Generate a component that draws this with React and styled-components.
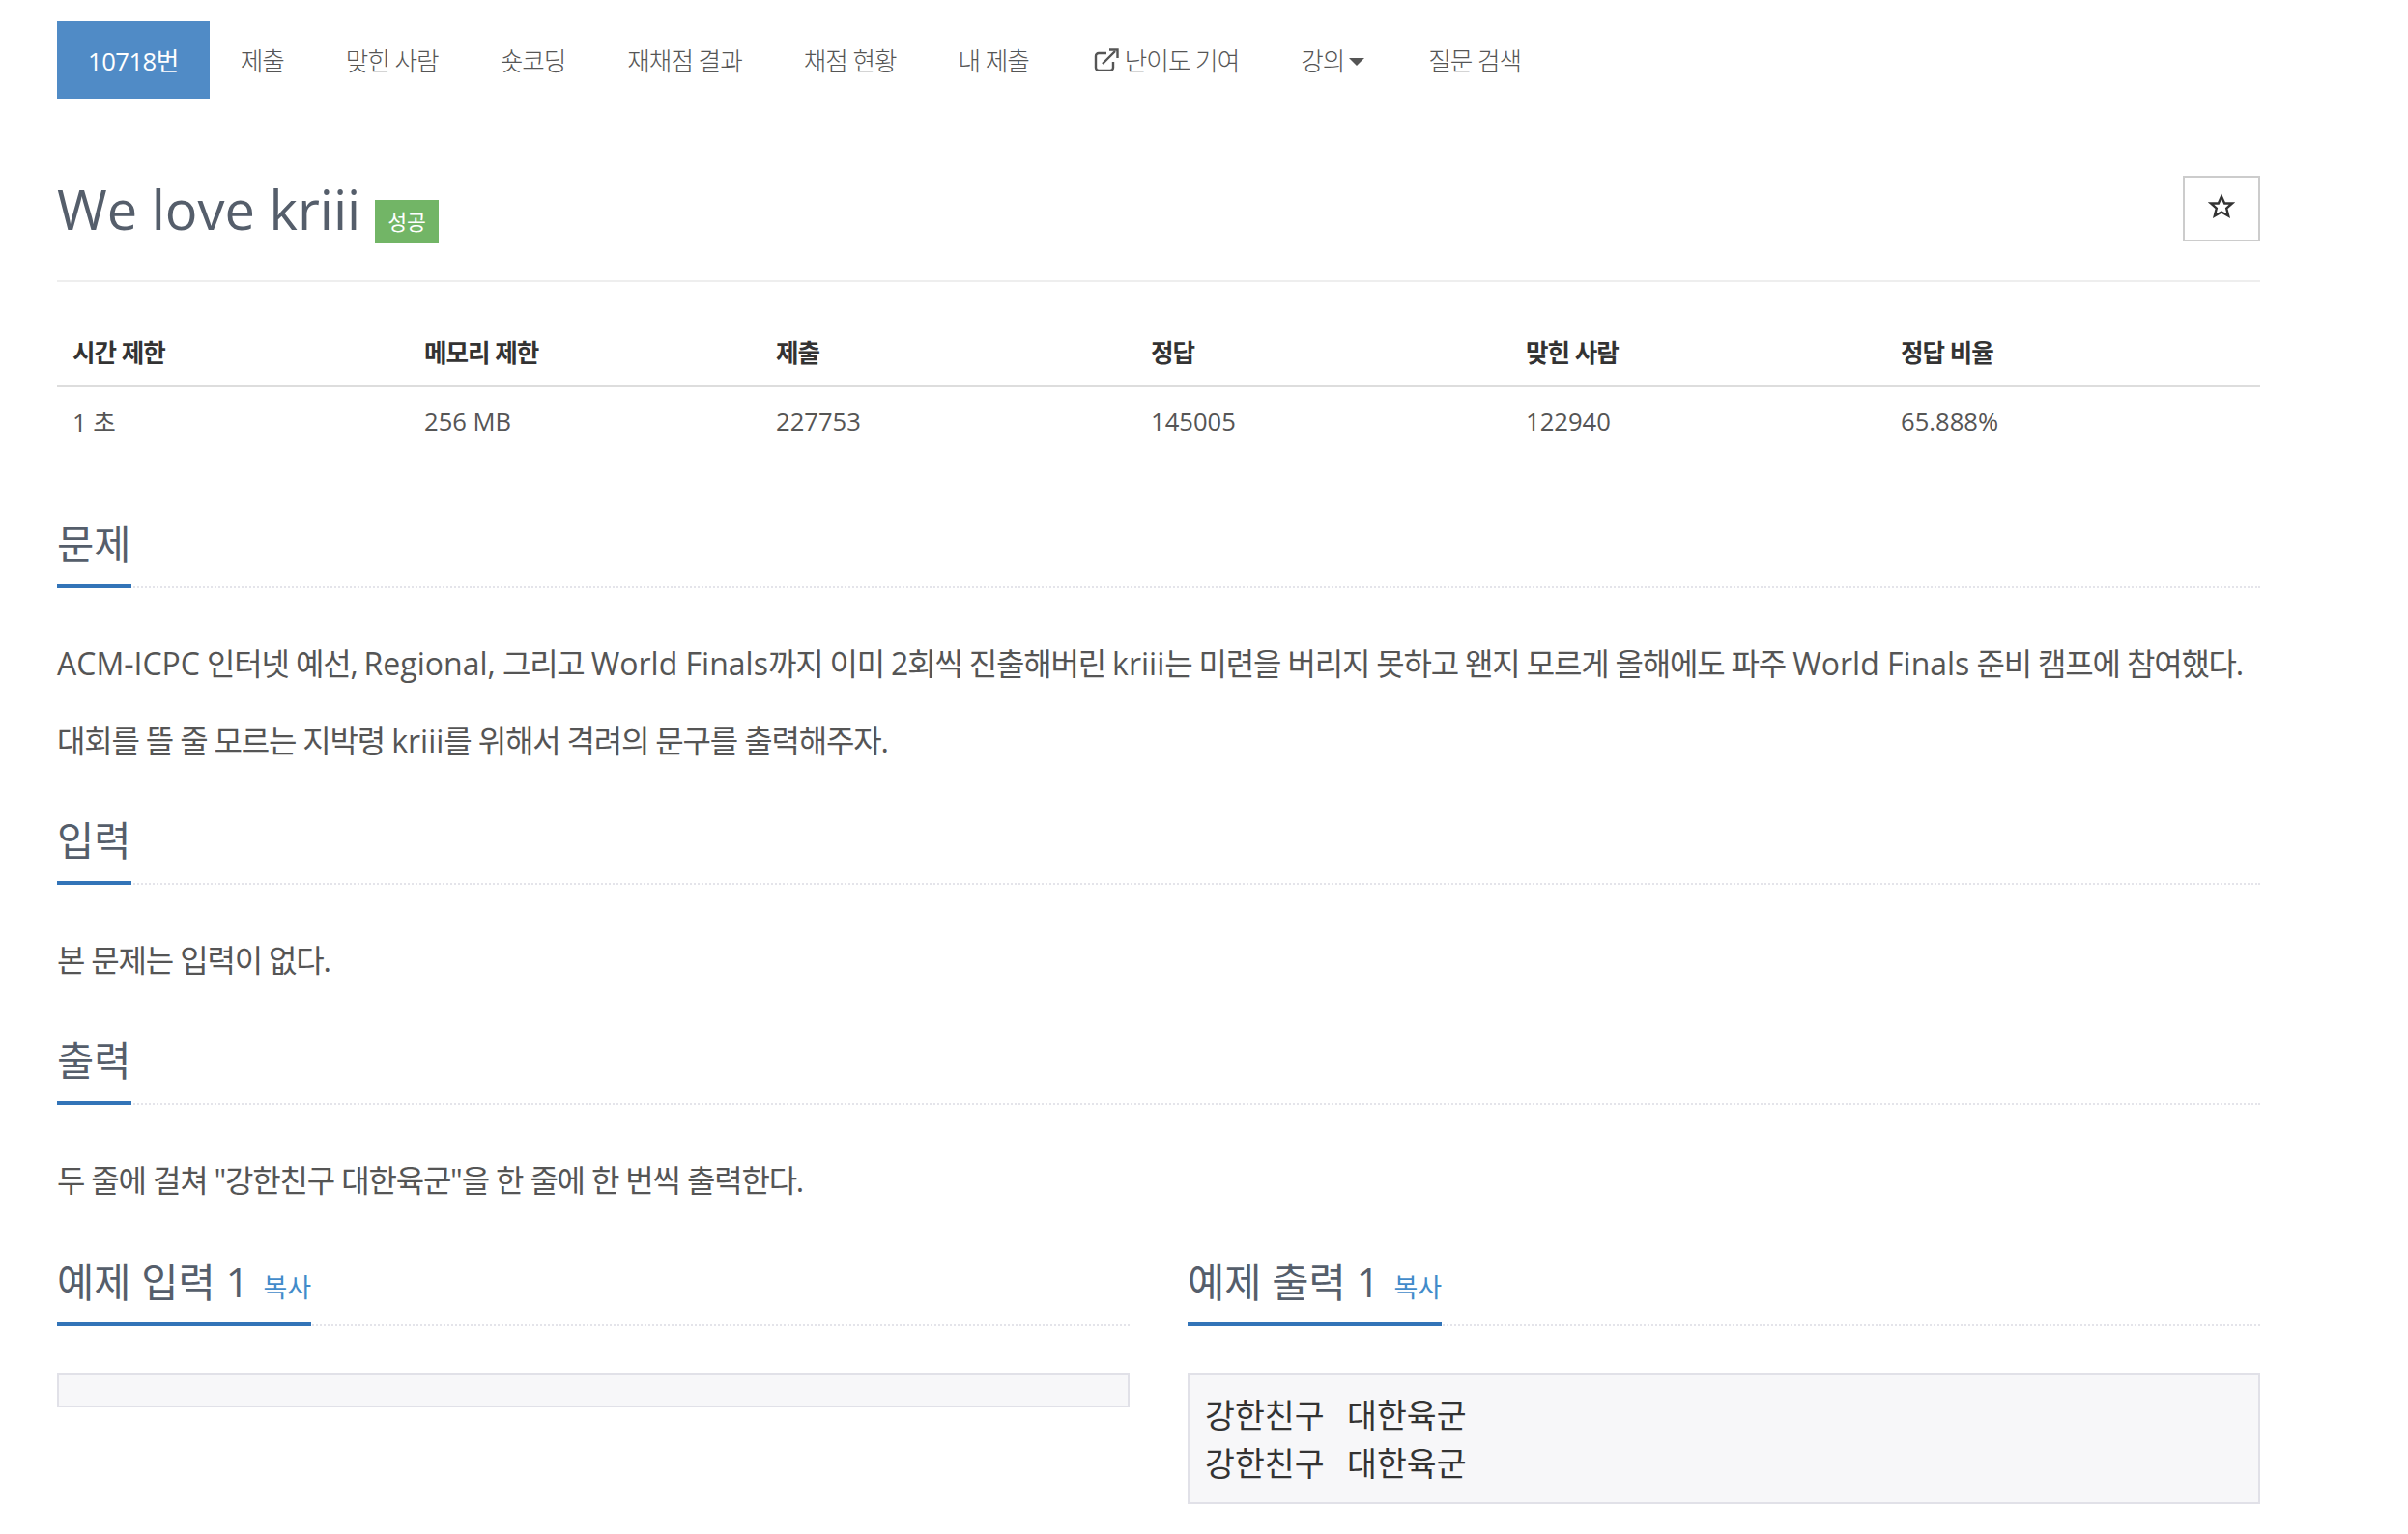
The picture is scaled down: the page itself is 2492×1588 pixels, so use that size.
import React from "react";
import styled, { createGlobalStyle } from "styled-components";

const GlobalStyle = createGlobalStyle`
  html, body {
    margin: 0;
    background: #fff;
    color: #555;
    font-family: "Open Sans", "Noto Sans CJK KR", sans-serif;
    font-size: 25.6px;
  }
`;

const Page = styled.div`
  width: 2280px;
  padding: 22px 0 0 59px;
`;

const Nav = styled.ul`
  display: flex;
  list-style: none;
  margin: 0;
  padding: 0;
`;

const NavItem = styled.li`
  display: flex;
  align-items: center;
  gap: ${(p) => p.$gap || 0}px;
  height: 80px;
  padding: 0 32px;
  color: ${(p) => (p.$active ? "#fff" : "#555")};
  background: ${(p) => (p.$active ? "#508bc6" : "transparent")};
  font-weight: ${(p) => (p.$active ? 400 : 300)};
  letter-spacing: ${(p) => (p.$active ? -0.5 : -1)}px;
  white-space: nowrap;
`;

const LinkIcon = styled.svg`
  margin-left: 3px;
`;

const Caret = styled.span`
  display: inline-block;
  margin: 4px 2px 0 5px;
  border-top: 8px solid #555;
  border-left: 8px solid transparent;
  border-right: 8px solid transparent;
`;

const PageHeader = styled.div`
  display: flex;
  justify-content: space-between;
  margin-top: 80px;
  height: 108px;
  border-bottom: 2px solid #eee;
`;

const Title = styled.h1`
  display: flex;
  align-items: flex-start;
  margin: 0;
  padding-top: 2px;
  color: #555e6b;
  font-size: 56px;
  font-weight: 400;
  line-height: 64px;
`;

const Badge = styled.span`
  margin: 23px 0 0 15px;
  padding: 0 13px;
  height: 45px;
  line-height: 45px;
  background: #72b566;
  color: #fff;
  font-size: 21.6px;
`;

const StarButton = styled.div`
  display: flex;
  align-items: center;
  justify-content: center;
  box-sizing: border-box;
  width: 80px;
  height: 68px;
  padding-bottom: 5px;
  border: 2px solid #ccc;
  color: #333;
`;

const InfoTable = styled.table`
  width: 100%;
  margin-top: 28px;
  border-collapse: collapse;
  table-layout: fixed;
`;

const Th = styled.th`
  box-sizing: border-box;
  width: ${(p) => p.$width}px;
  height: 80px;
  padding: 8px 16px 0;
  border-bottom: 2px solid #ddd;
  color: #333;
  font-weight: 600;
  letter-spacing: -1px;
  text-align: left;
`;

const Td = styled.td`
  padding: 0 16px;
  height: 70px;
  color: #555;
`;

const Section = styled.section`
  margin-top: ${(p) => p.$top || 0}px;
`;

const Headline = styled.div`
  height: 70px;
  border-bottom: 2px dotted #e4e4ea;
`;

const HeadlineLabel = styled.h2`
  display: inline-block;
  box-sizing: border-box;
  height: 72px;
  margin: 0;
  border-bottom: 4px solid #3274b8;
  color: #555e6b;
  font-size: 41.6px;
  font-weight: 400;
  line-height: 52px;
  white-space: nowrap;
`;

const CopyLink = styled.span`
  margin-left: 15px;
  color: #428bca;
  font-size: 27px;
`;

const Text = styled.p`
  margin: ${(p) => p.$top || 0}px 0 0;
  color: #555;
  font-size: 32px;
  letter-spacing: -1.2px;
  line-height: 40px;
`;

const Latin = styled.span`
  letter-spacing: 0;
`;

const Samples = styled.div`
  display: grid;
  grid-template-columns: 1110px 1110px;
  gap: 60px;
  margin-top: 59px;
`;

const Pre = styled.pre`
  box-sizing: border-box;
  margin: 48px 0 0;
  min-height: 36px;
  padding: 16px;
  border: 2px solid #e1e1e8;
  background: #f7f7f9;
  color: #333;
  font-family: "Noto Sans CJK KR", monospace;
  font-size: 33.6px;
  line-height: 50px;
  word-spacing: 16px;
  ${(p) => p.$empty && "padding: 0; height: 36px;"}
`;

const columns = [
  ["시간 제한", "1 초", 364],
  ["메모리 제한", "256 MB", 364],
  ["제출", "227753", 388],
  ["정답", "145005", 388],
  ["맞힌 사람", "122940", 388],
  ["정답 비율", "65.888%", 388],
];

const navItems = ["제출", "맞힌 사람", "숏코딩", "재채점 결과", "채점 현황", "내 제출"];

const App = () => {
  return (
    <Page>
      <GlobalStyle />
      <Nav>
        <NavItem $active>10718번</NavItem>
        {navItems.map((item) => (
          <NavItem key={item}>{item}</NavItem>
        ))}
        <NavItem $gap={6}>
          <LinkIcon width="26" height="24" viewBox="0 0 26 24" fill="none" stroke="#555" strokeWidth="2.4">
            <path d="M13 5H5a3 3 0 0 0-3 3v12a3 3 0 0 0 3 3h12a3 3 0 0 0 3-3v-6" />
            <path d="M9 16L22 3" />
            <path d="M16 1.500h8.500V10" />
          </LinkIcon>
          난이도 기여
        </NavItem>
        <NavItem>
          강의
          <Caret />
        </NavItem>
        <NavItem>질문 검색</NavItem>
      </Nav>

      <PageHeader>
        <Title>
          We love kriii
          <Badge>성공</Badge>
        </Title>
        <StarButton>
          <svg width="28" height="27" viewBox="0 0 28 27" fill="none" stroke="#333" strokeWidth="2.4" strokeMiterlimit="10">
            <path d="M14 3.500L17.200 10.500 25 10.500 19.200 15.700 21.200 23.500 14 19.500 6.800 23.500 8.800 15.700 3 10.500 10.800 10.500Z" />
          </svg>
        </StarButton>
      </PageHeader>

      <InfoTable>
        <thead>
          <tr>
            {columns.map(([label, , width]) => (
              <Th key={label} $width={width}>{label}</Th>
            ))}
          </tr>
        </thead>
        <tbody>
          <tr>
            {columns.map(([label, value]) => (
              <Td key={label}>{value}</Td>
            ))}
          </tr>
        </tbody>
      </InfoTable>

      <Section $top={66}>
        <Headline><HeadlineLabel>문제</HeadlineLabel></Headline>
        <Text $top={58}>
          <Latin>ACM-ICPC</Latin> 인터넷 예선, <Latin>Regional,</Latin> 그리고 <Latin>World Finals</Latin>까지 이미 2회씩 진출해버린 <Latin>kriii</Latin>는 미련을 버리지 못하고 왠지 모르게 올해에도 파주 <Latin>World Finals</Latin> 준비 캠프에 참여했다.
        </Text>
        <Text $top={40}>대회를 뜰 줄 모르는 지박령 <Latin>kriii</Latin>를 위해서 격려의 문구를 출력해주자.</Text>
      </Section>

      <Section $top={57}>
        <Headline><HeadlineLabel>입력</HeadlineLabel></Headline>
        <Text $top={58}>본 문제는 입력이 없다.</Text>
      </Section>

      <Section $top={58}>
        <Headline><HeadlineLabel>출력</HeadlineLabel></Headline>
        <Text $top={58}>두 줄에 걸쳐 "강한친구 대한육군"을 한 줄에 한 번씩 출력한다.</Text>
      </Section>

      <Samples>
        <div>
          <Headline>
            <HeadlineLabel>예제 입력 1<CopyLink>복사</CopyLink></HeadlineLabel>
          </Headline>
          <Pre $empty />
        </div>
        <div>
          <Headline>
            <HeadlineLabel>예제 출력 1<CopyLink>복사</CopyLink></HeadlineLabel>
          </Headline>
          <Pre>{"강한친구 대한육군\n강한친구 대한육군"}</Pre>
        </div>
      </Samples>
    </Page>
  );
};

export default App;
